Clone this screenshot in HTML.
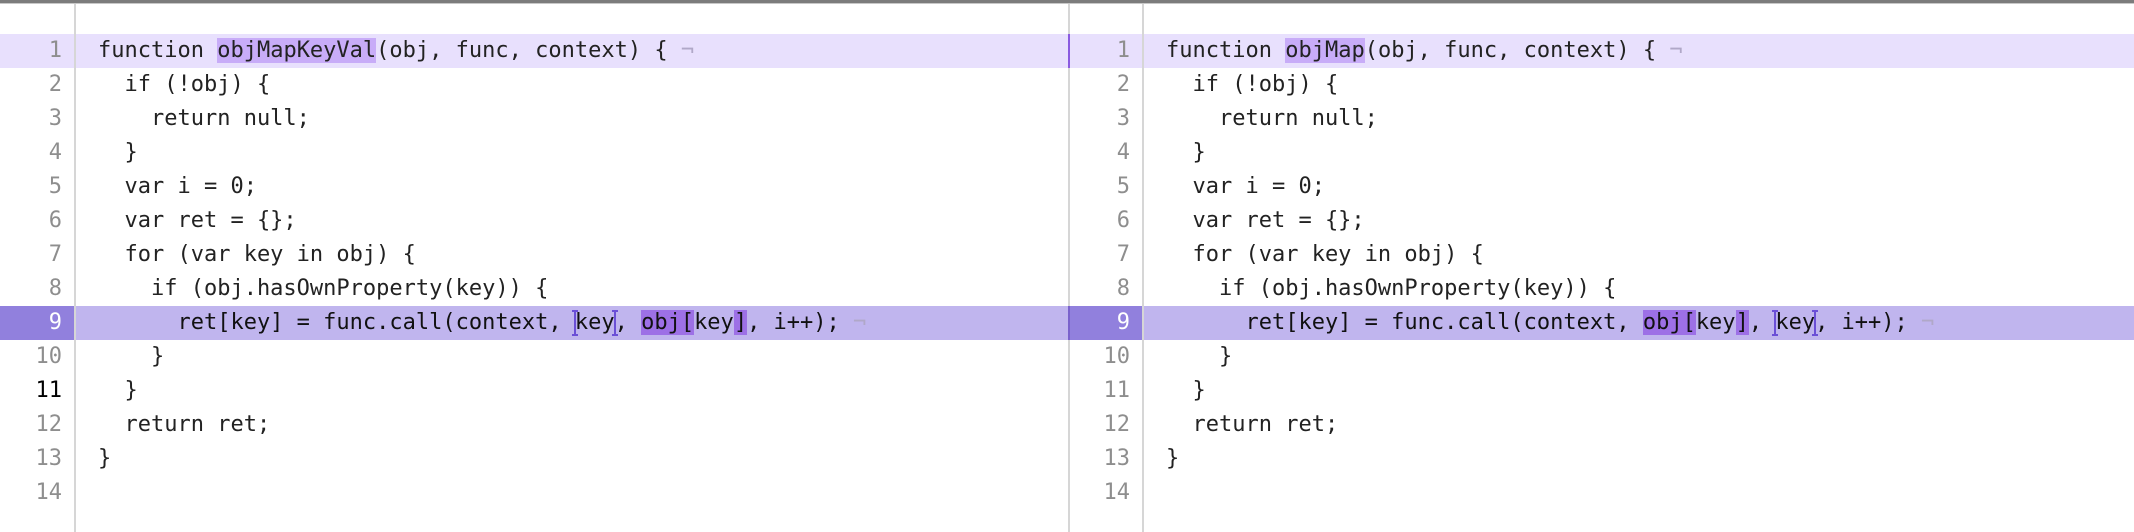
<!DOCTYPE html>
<html><head><meta charset="utf-8"><style>
html,body{margin:0;padding:0;}
body{width:2134px;height:532px;position:relative;overflow:hidden;background:#fff;font-family:"DejaVu Sans Mono","Liberation Mono",monospace;font-size:22px;color:#222;}
.topbar{position:absolute;left:0;top:0;width:2134px;height:3px;background:#7c7c7c;}
.topbar2{position:absolute;left:0;top:3px;width:2134px;height:1px;background:#c8c8c8;}
.vl{position:absolute;top:4px;bottom:0;width:2px;background:#d6d6d6;}
.row{position:absolute;height:34px;}
.num{position:absolute;height:34px;line-height:34px;text-align:right;color:#8e8e8e;width:40px;}
.code{position:absolute;height:34px;line-height:34px;white-space:pre;}
.hl1{background:#c8acf8;}
.hl9{background:#9d70e6;}
.pil{color:#b0a8c8;}
.ib{display:inline-block;position:relative;}
.ib:before{content:"";position:absolute;top:4px;height:26px;width:2px;background:#6b4fd6;}
.ibl:before{left:-1px;}
.ibr:before{right:-1px;}
.ib:after{content:"";position:absolute;top:4px;height:26px;width:6px;border-top:2px solid #6b4fd6;border-bottom:2px solid #6b4fd6;box-sizing:border-box;}
.ibl:after{left:-3px;}
.ibr:after{right:-3px;}
</style></head><body>
<div class="topbar"></div><div class="topbar2"></div>

<div class="row" style="top:34px;left:0;width:2134px;background:#e8e0fd;"></div>
<div class="row" style="top:306px;left:0;width:2134px;background:#c0b5ee;"></div>
<div class="row" style="top:306px;left:0;width:75px;background:#9180dd;"></div>
<div class="row" style="top:306px;left:1069px;width:74px;background:#9180dd;"></div>

<div class="vl" style="left:74px;"></div>
<div class="vl" style="left:1068px;"></div>
<div class="vl" style="left:1142px;"></div>
<div class="row" style="top:34px;left:1068px;width:2px;background:#8a5ae0;"></div>
<div class="row" style="top:306px;left:1068px;width:2px;background:#7a62cc;"></div>

<div class="num" style="left:22px;top:34px">1</div>
<div class="num" style="left:22px;top:68px">2</div>
<div class="num" style="left:22px;top:102px">3</div>
<div class="num" style="left:22px;top:136px">4</div>
<div class="num" style="left:22px;top:170px">5</div>
<div class="num" style="left:22px;top:204px">6</div>
<div class="num" style="left:22px;top:238px">7</div>
<div class="num" style="left:22px;top:272px">8</div>
<div class="num" style="left:22px;top:306px;color:#fff">9</div>
<div class="num" style="left:22px;top:340px">10</div>
<div class="num" style="left:22px;top:374px;color:#000">11</div>
<div class="num" style="left:22px;top:408px">12</div>
<div class="num" style="left:22px;top:442px">13</div>
<div class="num" style="left:22px;top:476px">14</div>

<div class="num" style="left:1090px;top:34px">1</div>
<div class="num" style="left:1090px;top:68px">2</div>
<div class="num" style="left:1090px;top:102px">3</div>
<div class="num" style="left:1090px;top:136px">4</div>
<div class="num" style="left:1090px;top:170px">5</div>
<div class="num" style="left:1090px;top:204px">6</div>
<div class="num" style="left:1090px;top:238px">7</div>
<div class="num" style="left:1090px;top:272px">8</div>
<div class="num" style="left:1090px;top:306px;color:#fff">9</div>
<div class="num" style="left:1090px;top:340px">10</div>
<div class="num" style="left:1090px;top:374px">11</div>
<div class="num" style="left:1090px;top:408px">12</div>
<div class="num" style="left:1090px;top:442px">13</div>
<div class="num" style="left:1090px;top:476px">14</div>

<div class="code" style="left:98px;top:34px">function <span class="hl1">objMapKeyVal</span>(obj, func, context) { <span class="pil">¬</span></div>
<div class="code" style="left:98px;top:68px">  if (!obj) {</div>
<div class="code" style="left:98px;top:102px">    return null;</div>
<div class="code" style="left:98px;top:136px">  }</div>
<div class="code" style="left:98px;top:170px">  var i = 0;</div>
<div class="code" style="left:98px;top:204px">  var ret = {};</div>
<div class="code" style="left:98px;top:238px">  for (var key in obj) {</div>
<div class="code" style="left:98px;top:272px">    if (obj.hasOwnProperty(key)) {</div>
<div class="code" style="left:98px;top:306px;color:#111">      ret[key] = func.call(context, <span class="ib ibl">k</span>e<span class="ib ibr">y</span>, <span class="hl9">obj[</span>key<span class="hl9">]</span>, i++); <span class="pil">¬</span></div>
<div class="code" style="left:98px;top:340px">    }</div>
<div class="code" style="left:98px;top:374px">  }</div>
<div class="code" style="left:98px;top:408px">  return ret;</div>
<div class="code" style="left:98px;top:442px">}</div>

<div class="code" style="left:1166px;top:34px">function <span class="hl1">objMap</span>(obj, func, context) { <span class="pil">¬</span></div>
<div class="code" style="left:1166px;top:68px">  if (!obj) {</div>
<div class="code" style="left:1166px;top:102px">    return null;</div>
<div class="code" style="left:1166px;top:136px">  }</div>
<div class="code" style="left:1166px;top:170px">  var i = 0;</div>
<div class="code" style="left:1166px;top:204px">  var ret = {};</div>
<div class="code" style="left:1166px;top:238px">  for (var key in obj) {</div>
<div class="code" style="left:1166px;top:272px">    if (obj.hasOwnProperty(key)) {</div>
<div class="code" style="left:1166px;top:306px;color:#111">      ret[key] = func.call(context, <span class="hl9">obj[</span>key<span class="hl9">]</span>, <span class="ib ibl">k</span>e<span class="ib ibr">y</span>, i++); <span class="pil">¬</span></div>
<div class="code" style="left:1166px;top:340px">    }</div>
<div class="code" style="left:1166px;top:374px">  }</div>
<div class="code" style="left:1166px;top:408px">  return ret;</div>
<div class="code" style="left:1166px;top:442px">}</div>
</body></html>
